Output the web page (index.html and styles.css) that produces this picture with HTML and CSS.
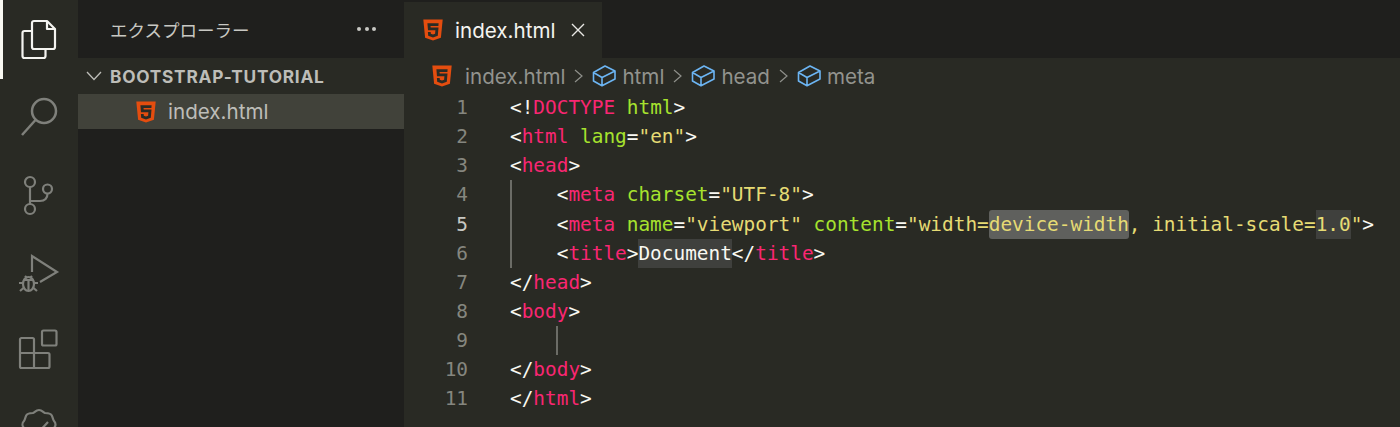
FILE: index.html
```html
<!DOCTYPE html>
<html lang="ja">
<head>
<meta charset="utf-8">
<title>VS Code</title>
<link rel="stylesheet" href="styles.css">
</head>
<body>
<svg class="defs" width="0" height="0" aria-hidden="true">
  <symbol id="h5" viewBox="0 0 20 22">
    <path fill="#e44d0f" d="M0.3 0.5h19.4l-1.8 18.2L10 21.5l-7.900-2.800z"/>
    <path fill="#2a2b25" d="M15.600 4.200H4.400l.6 7h7.400l-.3 3.500-2.100.7-2.200-.7-.1-1.600H4.900l.3 3.700 4.800 1.600 4.800-1.600.7-8.200H7.700l-.2-1.700h7.900z"/>
  </symbol>
  <symbol id="cube" viewBox="0 0 24 22">
    <path fill="none" stroke="#6cb5f3" stroke-width="1.600" stroke-linejoin="round" d="M1.500 7.500 13 1l10 5v8l-13 6.800-8.500-4.800zM1.500 7.500l8.500 5v8.300M10 12.500 23 6"/>
  </symbol>
</svg>
<div class="window">
  <nav class="activity">
    <div class="act act-on">
      <svg width="36" height="40" viewBox="0 -1 36 40" fill="none" stroke="#f4f4f0" stroke-width="2.200" stroke-linejoin="round"><path d="M11 11H3.500a2 2 0 0 0-2 2v23a2 2 0 0 0 2 2h19a2 2 0 0 0 2-2v-7"/><path d="M13 1h13l8 8v18a2 2 0 0 1-2 2H13a2 2 0 0 1-2-2V3a2 2 0 0 1 2-2z"/><path d="M26 1v8h8"/></svg>
    </div>
    <div class="act">
      <svg width="38" height="42" viewBox="0 0 38 42" fill="none" stroke="#7f807b" stroke-width="2.500"><circle cx="24" cy="14" r="12"/><path d="M15.500 23 2 38"/></svg>
    </div>
    <div class="act">
      <svg width="32" height="40" viewBox="0 0 32 40" fill="none" stroke="#7f807b" stroke-width="2.200"><circle cx="7" cy="6" r="5"/><circle cx="7" cy="33" r="5"/><circle cx="24.500" cy="13" r="4.500"/><path d="M7 11v17M7 25h10c5 0 7.500-3 7.500-7.500"/></svg>
    </div>
    <div class="act">
      <svg width="40" height="40" viewBox="0 1 40 40" fill="none" stroke="#7f807b" stroke-width="2.200"><path d="M13 18V2l25 16-17 10"/><ellipse cx="9.500" cy="30" rx="5.500" ry="7"/><path d="M4.500 26h10M6 22l2 2M13 22l-2 2M4 29H0M15 29h4M4.500 34 1 37M14.500 34l3.500 3M9.500 26v11"/></svg>
    </div>
    <div class="act">
      <svg width="40" height="40" viewBox="0 3.500 40 40" fill="none" stroke="#7f807b" stroke-width="2.200" stroke-linejoin="round"><rect x="23" y="1" width="14.500" height="15" rx="1.500"/><path d="M2.500 8.500h11a1.500 1.500 0 0 1 1.500 1.500v13.500h14a1.500 1.500 0 0 1 1.500 1.500v12a1.500 1.500 0 0 1-1.500 1.500H2.500A1.500 1.500 0 0 1 1 37V10a1.500 1.500 0 0 1 1.500-1.500zM1 23.500h14M15 23.500v15"/></svg>
    </div>
    <div class="act">
      <svg width="36" height="40" viewBox="0 4 36 40" fill="none" stroke="#7f807b" stroke-width="2.200" stroke-linejoin="round"><path d="M18 2c-3 0-4 2-6 3-3 0-6 0-7 3-1 2-1 4-2 5-2 2-2 5 0 7 1 2 1 4 2 6 1 3 4 3 7 3 2 1 3 3 6 3s4-2 6-3c3 0 6 0 7-3 1-2 1-4 2-6 2-2 2-5 0-7-1-1-1-3-2-5-1-3-4-3-7-3-2-1-3-3-6-3z"/><path d="M10 20l6 6 11-12"/></svg>
    </div>
  </nav>
  <aside class="sidebar">
    <header class="side-head">
      <span class="side-title">エクスプローラー</span>
      <span class="side-more"><i></i><i></i><i></i></span>
    </header>
    <div class="section">
      <svg class="chev" width="16" height="10" viewBox="0 0 16 10" fill="none" stroke="#bdbdb8" stroke-width="1.300"><path d="M1 1l7 7.500L15 1"/></svg>
      <span>BOOTSTRAP-TUTORIAL</span>
    </div>
    <div class="file">
      <svg class="h5" width="20" height="22"><use href="#h5"/></svg>
      <span>index.html</span>
    </div>
  </aside>
  <main class="editor">
    <div class="tabs">
      <div class="tab">
        <svg class="h5" width="20" height="22"><use href="#h5"/></svg>
        <span class="tab-name">index.html</span>
        <svg class="close" width="14" height="14" viewBox="0 0 14 14" stroke="#e8e8e4" stroke-width="1.400"><path d="M1 1l12 12M13 1 1 13"/></svg>
      </div>
    </div>
    <div class="crumbs">
      <svg class="h5 crumb-file" width="20" height="22"><use href="#h5"/></svg>
      <span>index.html</span>
      <svg class="sep" width="9" height="14" viewBox="0 0 9 14" fill="none" stroke="#8f908b" stroke-width="1.200"><path d="M1 1l7 6-7 6"/></svg>
      <svg class="cube" width="24" height="22"><use href="#cube"/></svg><span>html</span>
      <svg class="sep" width="9" height="14" viewBox="0 0 9 14" fill="none" stroke="#8f908b" stroke-width="1.200"><path d="M1 1l7 6-7 6"/></svg>
      <svg class="cube" width="24" height="22"><use href="#cube"/></svg><span>head</span>
      <svg class="sep" width="9" height="14" viewBox="0 0 9 14" fill="none" stroke="#8f908b" stroke-width="1.200"><path d="M1 1l7 6-7 6"/></svg>
      <svg class="cube" width="24" height="22"><use href="#cube"/></svg><span>meta</span>
    </div>
    <div class="code">
      <div class="line"><span class="num">1</span><span class="src">&lt;!<b class="k">DOCTYPE</b> <b class="a">html</b>&gt;</span></div>
      <div class="line"><span class="num">2</span><span class="src">&lt;<b class="k">html</b> <b class="a">lang</b>=<b class="s">"en"</b>&gt;</span></div>
      <div class="line"><span class="num">3</span><span class="src">&lt;<b class="k">head</b>&gt;</span></div>
      <div class="line"><span class="num">4</span><span class="src guide">    &lt;<b class="k">meta</b> <b class="a">charset</b>=<b class="s">"UTF-8"</b>&gt;</span></div>
      <div class="line cur"><span class="num">5</span><span class="src guide">    &lt;<b class="k">meta</b> <b class="a">name</b>=<b class="s">"viewport"</b> <b class="a">content</b>=<b class="s">"width=<em class="hl-strong">device-width</em>, initial-scale=<em class="hl">1.0</em>"</b>&gt;</span></div>
      <div class="line"><span class="num">6</span><span class="src guide">    &lt;<b class="k">title</b>&gt;<em class="hl">Document</em>&lt;/<b class="k">title</b>&gt;</span></div>
      <div class="line"><span class="num">7</span><span class="src">&lt;/<b class="k">head</b>&gt;</span></div>
      <div class="line"><span class="num">8</span><span class="src">&lt;<b class="k">body</b>&gt;</span></div>
      <div class="line"><span class="num">9</span><span class="src guide-body"> </span></div>
      <div class="line"><span class="num">10</span><span class="src">&lt;/<b class="k">body</b>&gt;</span></div>
      <div class="line"><span class="num">11</span><span class="src">&lt;/<b class="k">html</b>&gt;</span></div>
    </div>
  </main>
</div>
</body>
</html>
```
FILE: styles.css
```css
* { box-sizing: border-box; }
html, body { margin: 0; height: 100%; overflow: hidden; background: #1f1f1d; }
.defs { position: absolute; }
.window {
  display: flex; height: 427px; width: 1400px; overflow: hidden;
  font-family: Inter, "Noto Sans CJK JP", sans-serif; font-size: 20.6px; color: #bdbdb8;
}
.activity { width: 78px; flex: none; background: #292a24; display: flex; flex-direction: column; height: 427px; overflow: hidden; }
.act { height: 78.5px; flex: none; display: flex; align-items: center; justify-content: center; border-left: 3px solid transparent; padding-right: 3px; }
.act svg { overflow: visible; }
.act-on { border-left-color: #f8f8f2; }
.sidebar { width: 326px; flex: none; background: #1f1f1d; }
.side-head { height: 58px; display: flex; align-items: center; justify-content: space-between; padding: 0 28px 0 32px; }
.side-title { font-family: "Noto Sans CJK JP", sans-serif; font-size: 17.5px; color: #c8c8c3; }
.side-more { display: flex; gap: 3.5px; }
.side-more i { width: 4px; height: 4px; border-radius: 50%; background: #c8c8c3; }
.section { height: 36px; background: #292a24; display: flex; align-items: center; gap: 8px; padding-left: 8px; font-weight: 700; font-size: 17.3px; letter-spacing: 0.75px; color: #bdbdb8; }
.file { height: 35px; background: #41423a; display: flex; align-items: center; gap: 12px; padding-left: 58px; color: #bdbdb8; }
.editor { flex: 1; min-width: 0; background: #292a24; display: flex; flex-direction: column; }
.tabs { height: 58px; flex: none; background: #1f1f1d; padding-top: 2px; }
.tab { width: 198px; height: 56px; background: #292a24; display: flex; align-items: center; padding-left: 19px; gap: 12px; }
.tab-name { color: #f4f4f0; }
.close { margin-left: 4px; }
.crumbs { height: 35px; padding: 1px 0 0 28px; flex: none; display: flex; align-items: center; color: #92938e; }
.crumb-file { margin-right: 13px; }
.sep { margin: 0 9px 0 9px; }
.cube { margin-right: 6px; }
.code { font-family: "DejaVu Sans Mono", monospace; font-size: 19.4px; color: #f8f8f2; }
.line { height: 29.15px; line-height: 29.15px; display: flex; white-space: pre; }
.num { width: 64px; flex: none; text-align: right; color: #85867f; }
.cur .num { color: #c8c8c3; }
.src { margin-left: 42px; position: relative; flex: 1; }
.src b { font-weight: 400; }
.k { color: #f92672; }
.a { color: #a6e22e; }
.s { color: #e6db74; }
.src em { font-style: normal; display: inline-block; height: 29px; }
.hl { background: #3f403d; }
.hl-strong { background: #5f605d; border-radius: 3px; }
.guide::before, .guide-body::before { content: ""; position: absolute; top: 0; bottom: 0; width: 2px; background: #6b6c66; }
.guide::before { left: 0; }
.guide-body::before { left: 46px; }
```
